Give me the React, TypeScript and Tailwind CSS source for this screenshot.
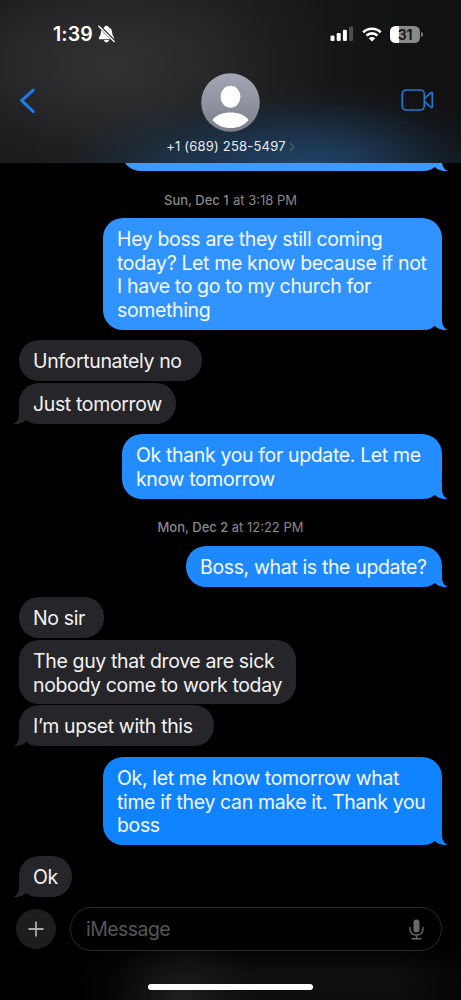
import clsx from "clsx";

type Message = {
  kind: "sent" | "received";
  lines: string[];
  box: string;
  color?: string;
  tail?: boolean;
};

type Stamp = {
  kind: "stamp";
  day: string;
  time: string;
  box: string;
};

const thread: (Message | Stamp)[] = [
  { kind: "stamp", day: "Sun, Dec 1", time: "at 3:18 PM", box: "mt-[19px] w-[133px]" },
  {
    kind: "sent",
    lines: [
      "Hey boss are they still coming",
      "today? Let me know because if not",
      "I have to go to my church for",
      "something",
    ],
    box: "mt-[8px] h-[112px] w-[339px] bg-[#3093ff]",
    color: "text-[#3093ff]",
    tail: true,
  },
  { kind: "received", lines: ["Unfortunately no"], box: "mt-[10px] h-[41px] w-[183px]" },
  { kind: "received", lines: ["Just tomorrow"], box: "mt-[2px] h-[41px] w-[157px]", tail: true },
  {
    kind: "sent",
    lines: ["Ok thank you for update. Let me", "know tomorrow"],
    box: "mt-[10px] h-[65px] w-[320px] bg-[#238cff]",
    color: "text-[#238cff]",
    tail: true,
  },
  { kind: "stamp", day: "Mon, Dec 2", time: "at 12:22 PM", box: "mt-[19px] w-[146px]" },
  {
    kind: "sent",
    lines: ["Boss, what is the update?"],
    box: "mt-[9px] h-[41px] w-[256px] bg-[#1e89ff]",
    color: "text-[#1e89ff]",
    tail: true,
  },
  { kind: "received", lines: ["No sir"], box: "mt-[10px] h-[41px] w-[85px]" },
  {
    kind: "received",
    lines: ["The guy that drove are sick", "nobody come to work today"],
    box: "mt-[2px] h-[64px] w-[277px]",
  },
  { kind: "received", lines: ["I’m upset with this"], box: "mt-px h-[41px] w-[195px]", tail: true },
  {
    kind: "sent",
    lines: ["Ok, let me know tomorrow what", "time if they can make it. Thank you", "boss"],
    box: "mt-[11px] h-[88px] w-[339px] bg-[#1083ff]",
    color: "text-[#1083ff]",
    tail: true,
  },
  { kind: "received", lines: ["Ok"], box: "mt-[11px] h-[41px] w-[53px]", tail: true },
];

function Tail({ className }: { className: string }) {
  return (
    <svg viewBox="0 0 22 18" className={clsx("absolute -bottom-px h-[18px] w-[22px]", className)}>
      <path d="M0 0H16V7C16 12 18 15.4 22 17.1C17 17.6 12 16.4 8.6 13C7 14.8 4 16.6 0 17Z" fill="currentColor" />
      <path d="M0 17C4 16.6 6.8 15 8.6 13C12 16.4 17 17.6 22 17.1V18H0Z" fill="#000" />
    </svg>
  );
}

function Bubble({ message }: { message: Message }) {
  const sent = message.kind === "sent";

  return (
    <div
      className={clsx(
        "relative shrink-0 rounded-[20px] px-[14px] pt-[10px] text-[19.5px] leading-[23.5px] tracking-[-0.36px] whitespace-nowrap",
        message.box,
        sent ? "self-end text-[#f4faff]" : "self-start bg-[#26252a] text-[#f2f2f4]",
      )}
    >
      {message.tail ? (
        <Tail className={sent ? clsx("-right-[6px]", message.color) : "-left-[6px] -scale-x-100 text-[#26252a]"} />
      ) : null}
      {message.lines.map((line) => (
        <p key={line} className="relative">
          {line}
        </p>
      ))}
    </div>
  );
}

function StatusBar() {
  return (
    <div className="flex h-[22px] items-center justify-between pr-[38px] pl-[53px]">
      <div className="flex items-center gap-[5px]">
        <span className="text-[19.5px] leading-[22px] font-semibold tracking-[0.1px]">1:39</span>
        <svg viewBox="0 0 17 18" className="h-[18px] w-[17px]">
          <path
            d="M8.5 .8C7.3 .8 6.4 1.5 6.2 2.4C3.8 3.2 2.8 5.3 2.8 8C2.8 10.6 .8 11.8 .8 13.2C.8 13.9 1.2 14.2 1.8 14.2H15.2C15.8 14.2 16.2 13.9 16.2 13.2C16.2 11.8 14.2 10.6 14.2 8C14.2 5.3 13.2 3.2 10.8 2.4C10.6 1.5 9.7 .8 8.5 .8ZM6 15H11C10.8 16.5 9.8 17.4 8.5 17.4S6.2 16.5 6 15Z"
            fill="#fff"
          />
          <path d="M1.2 1L16.6 16.4" stroke="#29292b" strokeWidth="2.9" />
          <path d="M.9 1.3L16.1 16.4" stroke="#fff" strokeWidth="1.4" strokeLinecap="round" />
        </svg>
      </div>
      <div className="flex items-center">
        <svg viewBox="0 0 24 16" className="h-4 w-6" fill="#fff">
          <rect x="0.5" y="9.5" width="4" height="5.5" rx="1.2" />
          <rect x="6.7" y="7" width="4" height="8" rx="1.2" />
          <rect x="12.9" y="3.7" width="4" height="11.3" rx="1.2" />
          <rect x="19.1" y="0.5" width="4" height="14.5" rx="1.2" opacity="0.25" />
        </svg>
        <svg viewBox="0 0 20 15" className="ml-[8px] h-[15px] w-5" fill="none" stroke="#fff" strokeWidth="2.6">
          <path d="M1.2 5.2C6.1.5 13.9.5 18.8 5.2" />
          <path d="M4.5 8.5C7.6 5.6 12.4 5.6 15.5 8.5" />
          <path d="M10 14.4L6.8 11.2C8.6 9.5 11.4 9.5 13.2 11.2Z" fill="#fff" stroke="none" />
        </svg>
        <div className="ml-[8px] flex h-[17px] w-[30px] items-center justify-center rounded-[5.5px] bg-[linear-gradient(to_right,#fff_31%,#8a8a8c_31%)] text-[14px] leading-[17px] font-bold tracking-[-0.3px] text-[#1a1a1b]">
          31
        </div>
        <div className="ml-px h-[5px] w-[2px] rounded-r-full bg-[#77777a]" />
      </div>
    </div>
  );
}

function Header() {
  return (
    <header className="h-[163px] shrink-0 bg-[radial-gradient(ellipse_210px_90px_at_305px_172px,#21456a_0%,#1f4166cc_30%,#1b365288_58%,#19283733_82%,transparent_100%),radial-gradient(ellipse_110px_75px_at_175px_175px,#1f405faa_0%,#1c344b66_50%,transparent_100%),radial-gradient(ellipse_230px_125px_at_110px_65px,#323234_0%,#2c2c2ecc_40%,#25252766_70%,transparent_100%),linear-gradient(to_right,#19191a,#1d1d1e_45%,#111112_90%)] pt-[23px]">
      <StatusBar />
      <div className="mt-[28px] flex items-start justify-between pr-[27px] pl-[19px]">
        <svg viewBox="0 0 17 26" className="mt-[15px] h-[26px] w-[17px]" fill="none">
          <path d="M14.2 2.2L2.6 12.6L14.2 23.4" stroke="#1d7fe5" strokeWidth="3.1" strokeLinecap="round" strokeLinejoin="round" />
        </svg>
        <div className="ml-[24px] flex flex-col items-center">
          <svg viewBox="0 0 59 59" className="h-[59px] w-[59px]">
            <defs>
              <linearGradient id="avatar" x1="0" y1="0" x2="0" y2="1">
                <stop stopColor="#a4a7b4" />
                <stop offset="1" stopColor="#7c7f8b" />
              </linearGradient>
            </defs>
            <circle cx="29.5" cy="29.5" r="29.3" fill="url(#avatar)" />
            <ellipse cx="29.5" cy="23.8" rx="9.9" ry="11" fill="#fff" />
            <path d="M11.4 47.2C15 42 22 39.6 29.5 39.6S44 42 47.6 47.2C43 52.2 37 55 29.5 55S16 52.2 11.4 47.2Z" fill="#fff" />
          </svg>
          <div className="mt-[5px] flex items-center gap-[3px] text-[13px] leading-[18px] tracking-[0.2px] whitespace-nowrap text-[#e9edf2]">
            +1 (689) 258-5497
            <svg viewBox="0 0 6 10" className="mt-px h-[10px] w-[6px]" fill="none">
              <path d="M1 1L5 5L1 9" stroke="#4f5f70" strokeWidth="1.2" />
            </svg>
          </div>
        </div>
        <svg viewBox="0 0 33 22" className="mt-[16px] h-[22px] w-[33px]" fill="none" stroke="#2377cf" strokeWidth="1.7">
          <rect x="1.3" y="1" width="22" height="20" rx="4" />
          <path d="M23.5 9.6L29.6 3.9Q31.3 2.6 31.3 4.4V17.6Q31.3 19.4 29.6 18.1L23.5 12.6" strokeLinejoin="round" />
        </svg>
      </div>
    </header>
  );
}

function Composer() {
  return (
    <footer className="flex h-[103px] shrink-0 flex-col items-center bg-[radial-gradient(ellipse_75px_70px_at_182px_103px,#1e2021_0%,#17181999_45%,transparent_100%),linear-gradient(to_right,#000_15%,transparent_45%,transparent_85%,#000000aa),linear-gradient(to_bottom,#000_45%,#0f0f10_75%,#0e0e0f)] pt-[10px]">
      <div className="flex w-full items-center pr-[19px] pl-[16px]">
        <div className="flex h-10 w-10 items-center justify-center rounded-full bg-[#1d1d1f]">
          <svg viewBox="0 0 16 16" className="h-4 w-4">
            <path d="M8 .5V15.5M.5 8H15.5" stroke="#aaaaac" strokeWidth="1.8" />
          </svg>
        </div>
        <div className="ml-[14px] flex h-[44px] flex-1 items-center justify-between rounded-full border border-[#29292b] bg-black pr-[17px] pl-[15px]">
          <span className="text-[19.5px] leading-6 tracking-[-0.55px] text-[#555557]">iMessage</span>
          <svg viewBox="0 0 15 21" className="h-[21px] w-[15px]" fill="none">
            <rect x="4.5" y="0.5" width="6" height="13" rx="3" fill="#69696b" />
            <path d="M1 8.5V10C1 13.8 3.6 16 7.5 16S14 13.8 14 10V8.5M7.5 16V19.5M3 19.7H12" stroke="#69696b" strokeWidth="1.4" strokeLinecap="round" />
          </svg>
        </div>
      </div>
      <div className="mt-[33px] h-[6px] w-[165px] rounded-full bg-white" />
    </footer>
  );
}

export default function App() {
  return (
    <div className="flex h-[1000px] w-[461px] flex-col overflow-hidden bg-black font-['Inter','Liberation_Sans',sans-serif] text-white">
      <Header />
      <main className="flex min-h-0 flex-1 flex-col px-[19px]">
        {/* bottom edge of the message scrolled under the header */}
        <div className="-mr-[6px] flex h-[9px] shrink-0 items-end overflow-hidden pr-[6px] pl-[102px]">
          <div className="relative h-[41px] w-full shrink-0 -translate-y-px rounded-[20px] bg-[#3b99ff]">
            <Tail className="-right-[6px] text-[#3b99ff]" />
          </div>
        </div>
        {thread.map((item, i) =>
          item.kind === "stamp" ? (
            <div
              key={i}
              className={clsx(
                "flex h-[19px] shrink-0 items-center justify-between self-center text-[13px] whitespace-nowrap text-[#88888b]",
                item.box,
              )}
            >
              <span className="font-medium">{item.day}</span>
              <span>{item.time}</span>
            </div>
          ) : (
            <Bubble key={i} message={item} />
          ),
        )}
      </main>
      <Composer />
    </div>
  );
}
